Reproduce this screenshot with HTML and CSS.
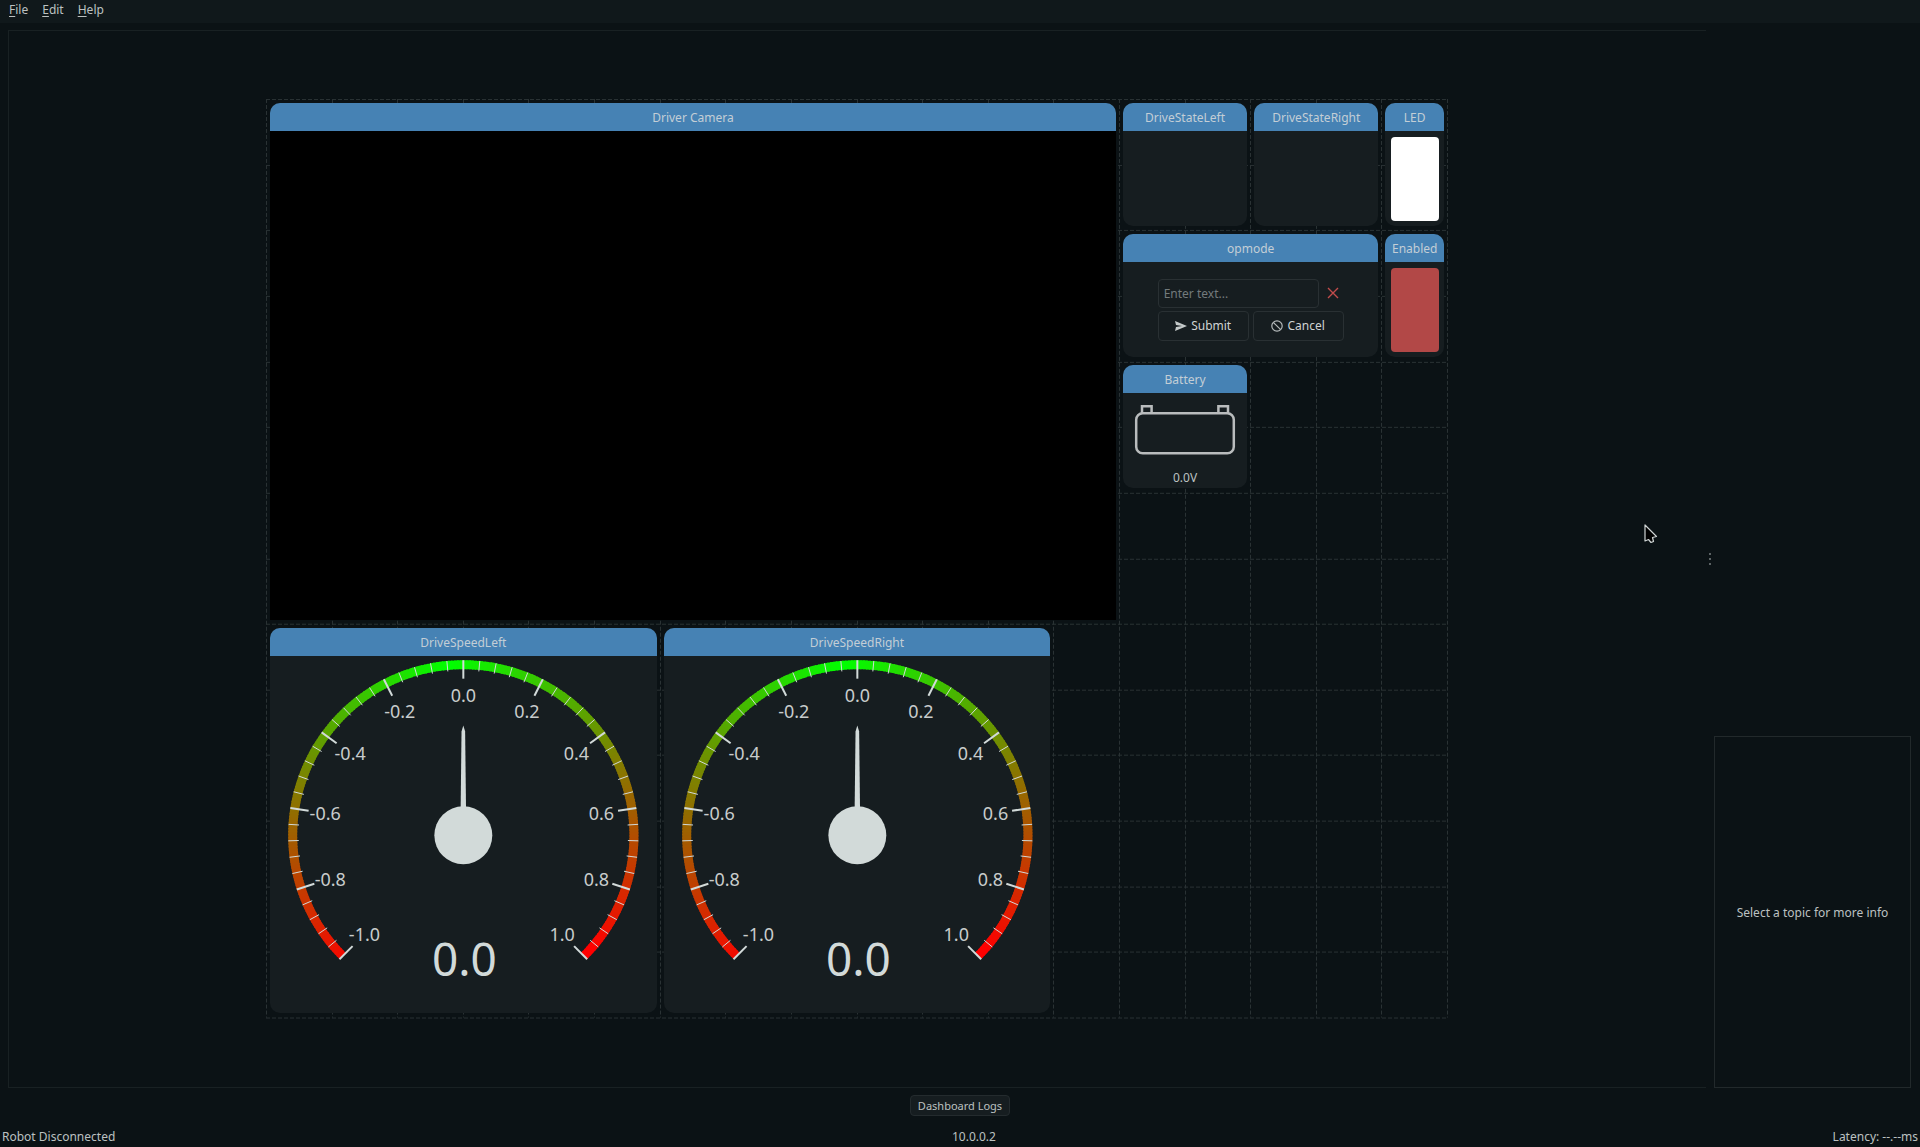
FILE: index.html
```html
<!DOCTYPE html>
<html lang="en">
<head>
<meta charset="utf-8">
<title>Robot Dashboard</title>
<link rel="stylesheet" href="styles.css">
</head>
<body>
<nav class="menubar">
  <button type="button"><u>F</u>ile</button>
  <button type="button"><u>E</u>dit</button>
  <button type="button"><u>H</u>elp</button>
</nav>

<div class="workspace">
  <main class="canvas">
    <div class="board">
      <svg class="gridlines" id="gridlines" viewBox="0 0 1181 919" preserveAspectRatio="none" aria-hidden="true"></svg>

      <section class="widget camera">
        <h2>Driver Camera</h2>
        <div class="body video"></div>
      </section>
      <section class="widget state-left">
        <h2>DriveStateLeft</h2>
        <div class="body"></div>
      </section>
      <section class="widget state-right">
        <h2>DriveStateRight</h2>
        <div class="body"></div>
      </section>
      <section class="widget led">
        <h2>LED</h2>
        <div class="body light"><div class="lamp white"></div></div>
      </section>
      <section class="widget opmode">
        <h2>opmode</h2>
        <div class="body">
          <form class="entry">
            <div class="entry-row">
              <input type="text" placeholder="Enter text..." aria-label="opmode">
              <button class="clear" type="reset" aria-label="Clear">
                <svg width="12" height="12" viewBox="0 0 12 12"><path d="M1 1 11 11M11 1 1 11" fill="none" stroke="#c14c4b" stroke-width="1.4"/></svg>
              </button>
            </div>
            <div class="entry-row buttons">
              <button class="btn" type="button">
                <svg width="12" height="12" viewBox="0 0 12 12"><path d="M0 1 12 6 0 11 1 7 7 6 1 5Z" fill="#c5caca"/></svg>Submit</button>
              <button class="btn" type="button">
                <svg width="12" height="12" viewBox="0 0 12 12"><g fill="none" stroke="#b4b9ba" stroke-width="1.2"><circle cx="6" cy="6" r="5.2"/><path d="M2.3 2.3 9.7 9.7"/></g></svg>Cancel</button>
            </div>
          </form>
        </div>
      </section>
      <section class="widget enabled">
        <h2>Enabled</h2>
        <div class="body light"><div class="lamp red"></div></div>
      </section>
      <section class="widget battery">
        <h2>Battery</h2>
        <div class="body cell">
          <svg width="102" height="52" viewBox="0 0 102 52" aria-hidden="true">
            <g fill="none" stroke="#b9bcbd" stroke-width="2.5">
              <rect x="2.2" y="9.2" width="97.6" height="40" rx="6.5"/>
              <path d="M8 9V2.2H17.6V9M84.4 9V2.2H94V9"/>
            </g>
          </svg>
          <p>0.0V</p>
        </div>
      </section>
      <section class="widget speed-left">
        <h2>DriveSpeedLeft</h2>
        <div class="body"><svg class="gauge" viewBox="0 0 386 358"></svg></div>
      </section>
      <section class="widget speed-right">
        <h2>DriveSpeedRight</h2>
        <div class="body"><svg class="gauge" viewBox="0 0 386 358"></svg></div>
      </section>
    </div>
  </main>

  <div class="splitter"><i></i><i></i><i></i></div>

  <aside class="sidebar">
    <div class="topics"></div>
    <div class="info">Select a topic for more info</div>
  </aside>
</div>

<div class="logs"><button type="button">Dashboard Logs</button></div>

<footer class="statusbar">
  <span>Robot Disconnected</span>
  <span>10.0.0.2</span>
  <span>Latency: --.--ms</span>
</footer>

<svg class="pointer" width="14" height="20" viewBox="0 0 14 20" aria-hidden="true"><path d="M1 1V17L4.5 15.5 7 18.5 9.5 17.5 8.5 13.5 12.5 12.5Z" fill="#000" stroke="#cfd4d4" stroke-width="1.2" stroke-linejoin="round"/></svg>

<script src="dashboard.js"></script>
</body>
</html>
```

FILE: styles.css
```css
* { box-sizing: border-box; }

body {
  margin: 0;
  min-height: 100vh;
  display: flex;
  flex-direction: column;
  background: #0b1215;
  color: #bcc1c1;
  font: 12px/18px "Noto Sans", sans-serif;
}

button, input {
  font: inherit;
  color: inherit;
}

/* Menu bar */
.menubar {
  display: flex;
  align-items: flex-start;
  gap: 14px;
  height: 23px;
  padding: 1px 9px 0;
  background: #10181b;
}
.menubar button {
  padding: 0;
  border: 0;
  background: none;
  line-height: 18px;
}
.menubar u { text-underline-offset: 2px; }

/* Workspace */
.workspace {
  flex: 1;
  display: flex;
  padding: 7px 9px 0 8px;
}
.canvas {
  flex: 1;
  min-width: 0;
  display: flex;
  align-items: center;
  justify-content: center;
  padding: 0 2px 2px 0;
  border: 1px solid #192123;
  border-right: 0;
}
.board {
  width: 100%;
  max-width: 1181px;
  aspect-ratio: 18 / 14;
  display: grid;
  grid-template: repeat(14, minmax(0, 1fr)) / repeat(18, minmax(0, 1fr));
}
.gridlines {
  grid-area: 1 / 1 / -1 / -1;
  width: 100%;
  height: 100%;
  overflow: visible;
}
.gridlines path {
  fill: none;
  stroke: #2a3234;
  stroke-width: 1;
  stroke-dasharray: 4 2;
}

/* Widgets */
.widget {
  display: flex;
  flex-direction: column;
  margin: 4px 3px 4px 4px;
  border-radius: 10px;
  background: #161d20;
  min-width: 0;
}
.widget h2 {
  margin: 0;
  height: 28px;
  border-radius: 10px 10px 0 0;
  background: #4682b4;
  color: #c3ced6;
  font-size: 12px;
  font-weight: 400;
  line-height: 30px;
  text-align: center;
}
.body {
  flex: 1;
  min-height: 0;
}
.camera { grid-area: 1 / 1 / 9 / 14; }
.state-left { grid-area: 1 / 14 / 3 / 16; }
.state-right { grid-area: 1 / 16 / 3 / 18; }
.led { grid-area: 1 / 18 / 3 / 19; }
.opmode { grid-area: 3 / 14 / 5 / 18; }
.enabled { grid-area: 3 / 18 / 5 / 19; }
.battery { grid-area: 5 / 14 / 7 / 16; }
.speed-left { grid-area: 9 / 1 / 15 / 7; }
.speed-right { grid-area: 9 / 7 / 15 / 13; }

.video { background: #000; }

.light {
  display: flex;
  padding: 6px 5px 5px 6px;
}
.lamp {
  flex: 1;
  border-radius: 4px;
}
.white { background: #fff; }
.red { background: #b24847; }

/* Text entry widget */
.opmode .body {
  display: flex;
  align-items: center;
  justify-content: center;
}
.entry {
  display: grid;
  grid-template-columns: minmax(0, 1fr);
  gap: 3px;
  width: 186px;
}
.entry-row {
  display: flex;
  gap: 8px;
  align-items: center;
}
.buttons { gap: 4px; }
.entry input {
  flex: 1;
  min-width: 0;
  height: 29px;
  padding: 0 5px;
  border: 1px solid #293033;
  border-radius: 4px;
  background: #161d20;
}
.entry input::placeholder { color: #737a7c; opacity: 1; }
.clear {
  display: flex;
  padding: 0 5px 0 0;
  border: 0;
  background: none;
}
.btn {
  flex: 1;
  display: flex;
  align-items: center;
  justify-content: center;
  gap: 4px;
  height: 30px;
  padding: 0;
  border: 1px solid #293033;
  border-radius: 4px;
  background: #161d20;
  color: #cfd3d3;
}

/* Battery widget */
.cell {
  display: flex;
  flex-direction: column;
  align-items: center;
  justify-content: space-between;
  padding: 11px 0 1px;
}
.cell p { margin: 0; }

/* Gauges */
.gauge {
  display: block;
  width: 100%;
  height: 100%;
}
.gauge .tick { stroke: #d2dad9; stroke-width: 1; }
.gauge .major { stroke-width: 2; }
.gauge text {
  fill: #c8cccc;
  font-size: 18px;
  text-anchor: middle;
}
.gauge .value {
  fill: #d2dad9;
  font-size: 46px;
}
.gauge .needle { fill: #d2dad9; }

/* Splitter and side panel */
.splitter {
  display: flex;
  flex-direction: column;
  align-items: center;
  justify-content: center;
  gap: 3px;
  width: 8px;
}
.splitter i {
  width: 2px;
  height: 2px;
  background: #5c6365;
}
.sidebar {
  display: flex;
  flex-direction: column;
  width: 197px;
}
.topics { flex: 67; }
.info {
  flex: 33;
  display: flex;
  align-items: center;
  justify-content: center;
  padding-top: 2px;
  border: 1px solid #22292b;
}

/* Bottom bars */
.logs {
  display: flex;
  justify-content: center;
  padding: 7px 0 10px;
}
.logs button {
  height: 21px;
  padding: 1px 7px 0;
  border: 1px solid #242b2e;
  border-radius: 4px;
  background: #161d20;
  font-size: 11px;
  line-height: 18px;
}
.statusbar {
  display: flex;
  justify-content: space-between;
  height: 21px;
  padding: 2px 2px 0;
}

.pointer {
  position: absolute;
  left: 1644px;
  top: 524px;
}
```

FILE: dashboard.js
```js
const NS = "http://www.w3.org/2000/svg";

function add(parent, name, attrs, text) {
  const el = document.createElementNS(NS, name);
  for (const key in attrs) el.setAttribute(key, attrs[key]);
  if (text !== undefined) el.textContent = text;
  parent.appendChild(el);
  return el;
}

// Board grid: 18 columns by 14 rows
const grid = document.getElementById("gridlines");
for (let c = 0; c <= 18; c++) add(grid, "path", { d: `M${Math.round(c * 1181 / 18) + 0.5} 0V919` });
for (let r = 0; r <= 14; r++) add(grid, "path", { d: `M0 ${Math.round(r * 919 / 14) + 0.5}H1181` });

// Gauge: -1 to 1 over 270 degrees
const CX = 193, CY = 179.5, R = 175.3;
function point(deg, r) {
  const a = deg * Math.PI / 180;
  return `${(CX + r * Math.sin(a)).toFixed(2)} ${(CY - r * Math.cos(a)).toFixed(2)}`;
}

function drawGauge(svg) {
  for (let a = -135; a < 135; a++) {
    const t = Math.min(1, Math.abs(a + 5) / 136);
    const color = `rgb(${Math.round(255 * t)},${Math.round(255 * (1 - t))},0)`;
    const end = Math.min(135, a + 1.4);
    add(svg, "path", {
      d: `M${point(a, R - 4.5)}A${R - 4.5} ${R - 4.5} 0 0 1 ${point(end, R - 4.5)}`,
      fill: "none", stroke: color, "stroke-width": 9
    });
  }
  for (let i = -25; i <= 25; i++) {
    const major = i % 5 === 0;
    const a = i * 5.4;
    add(svg, "path", {
      class: major ? "tick major" : "tick",
      d: `M${point(a, R)}L${point(a, R - (major ? 18.5 : 10.5))}`
    });
    if (major) {
      const [x, y] = point(a, 140).split(" ").map(Number);
      add(svg, "text", { x, y: y + 7 }, (i / 25).toFixed(1).replace("-0.0", "0.0"));
    }
  }
  add(svg, "path", { class: "needle", d: `M${CX - 3} ${CY}L${CX - 1.8} ${CY - 104}L${CX} ${CY - 110}L${CX + 1.8} ${CY - 104}L${CX + 3} ${CY}Z` });
  add(svg, "circle", { class: "needle", cx: CX, cy: CY, r: 29 });
  add(svg, "text", { class: "value", x: CX + 1, y: CY + 141 }, "0.0");
}
document.querySelectorAll(".gauge").forEach(drawGauge);
```
